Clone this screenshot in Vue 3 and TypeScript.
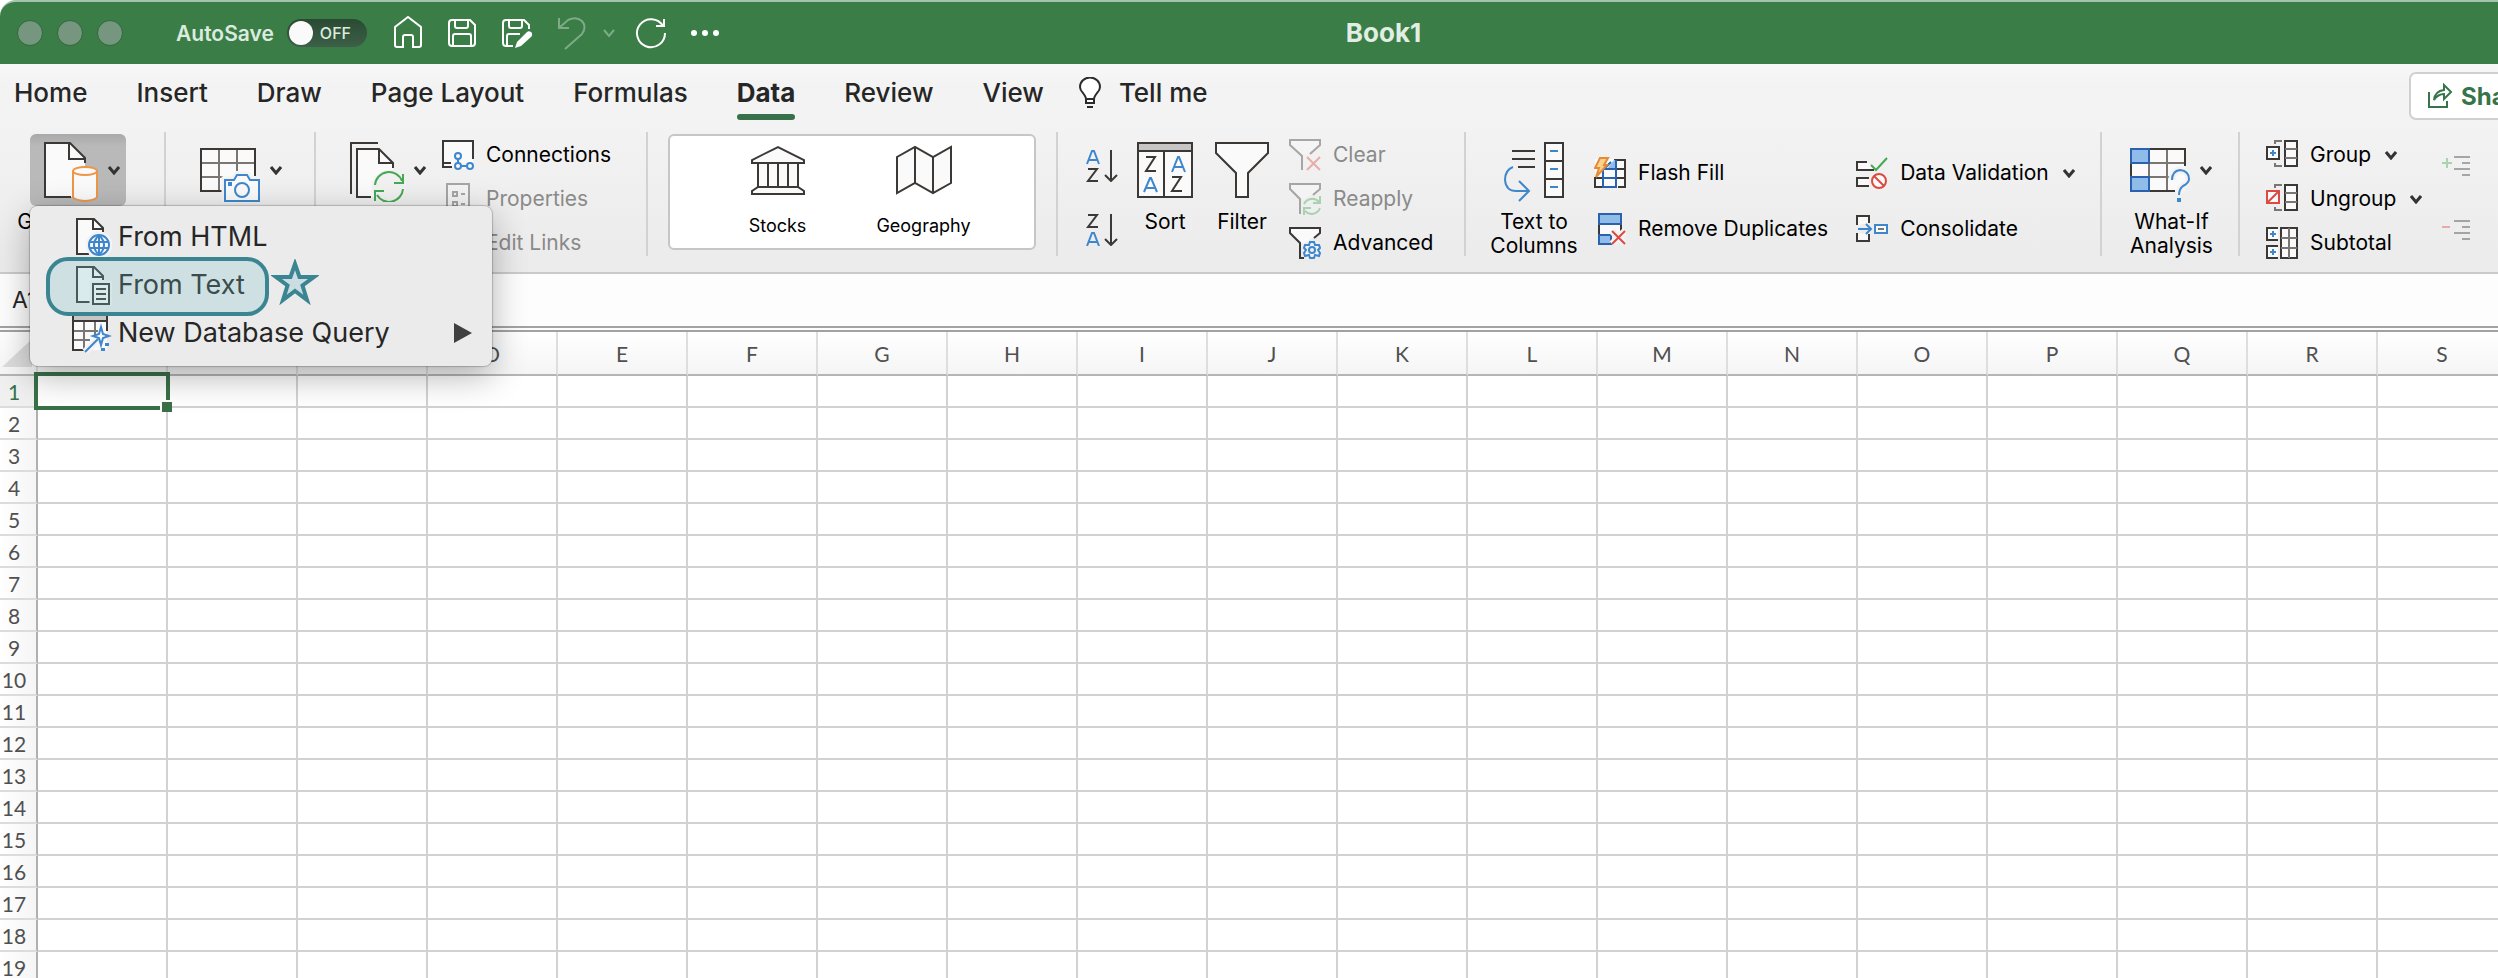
<script setup lang="ts">
import { ref } from 'vue'

const tabs: string[] = ['Home', 'Insert', 'Draw', 'Page Layout', 'Formulas', 'Data', 'Review', 'View']
const activeTab = ref<string>('Data')
const autoSave = ref<boolean>(false)
const cellName = ref<string>('A1')

const columns: string[] = Array.from({ length: 19 }, (_, i) => String.fromCharCode(65 + i))
const rows: number[] = Array.from({ length: 19 }, (_, i) => i + 1)
</script>

<template>
  <div class="window">
    <header class="titlebar">
      <div class="lights"><span></span><span></span><span></span></div>
      <label class="autosave">
        <span class="autosave-text">AutoSave</span>
        <span class="switch">
          <input v-model="autoSave" type="checkbox" role="switch" />
          <span class="switch-text">OFF</span>
        </span>
      </label>
      <div class="quick">
        <button type="button" aria-label="Home">
          <svg width="32" height="36" viewBox="0 0 32 36"><path d="M3 12L16 2L29 12V30Q29 32 27 32H21V22Q21 20 19 20H13Q11 20 11 22V32H5Q3 32 3 30Z" /></svg>
        </button>
        <button type="button" aria-label="Save">
          <svg width="32" height="36" viewBox="0 0 32 36"><path d="M6 5H24L29 10V28Q29 31 26 31H6Q3 31 3 28V8Q3 5 6 5ZM9 5V11Q9 13 11 13H20Q22 13 22 11V5M7 31V21Q7 19 9 19H23Q25 19 25 21V31" /></svg>
        </button>
        <button type="button" aria-label="Save as">
          <svg width="34" height="36" viewBox="0 0 34 36"><path d="M13 31H6Q3 31 3 28V8Q3 5 6 5H24L29 10V14M9 5V11Q9 13 11 13H20Q22 13 22 11V5M7 31V21Q7 19 9 19H20" /><path class="fill" d="M15 33L17 27L27 17Q29 15.500 31.500 17.500Q33 20 31 22L21 31Z" /></svg>
        </button>
        <button type="button" class="dim undo" aria-label="Undo">
          <svg width="32" height="36" viewBox="0 0 32 36"><path d="M3 3V13H13M3 13L12 5Q20 1 26 6Q31 12 26 19L9 34" /></svg>
        </button>
        <button type="button" class="dim drop" aria-label="Undo options">
          <svg width="14" height="36" viewBox="0 0 14 36"><path d="M2 15L7 21L12 15" /></svg>
        </button>
        <button type="button" class="redo" aria-label="Repeat">
          <svg width="34" height="36" viewBox="0 0 34 36"><path d="M29 11A14 14 0 1 0 31 18M30 4V11H22" /></svg>
        </button>
        <button type="button" class="more" aria-label="More">
          <svg width="30" height="36" viewBox="0 0 30 36"><g class="fill"><circle cx="4" cy="18" r="3" /><circle cx="15" cy="18" r="3" /><circle cx="26" cy="18" r="3" /></g></svg>
        </button>
      </div>
      <h1 class="doc">Book1</h1>
    </header>

    <nav class="tabs">
      <button v-for="tab in tabs" :key="tab" type="button" class="tab" :class="{ active: tab === activeTab }" @click="activeTab = tab">{{ tab }}</button>
      <button type="button" class="tab tell">
        <svg width="22" height="32" viewBox="0 0 22 32" fill="none" stroke="#2b2b2b" stroke-width="2"><path d="M7 26V22Q7 20 4 16Q1 13 1 10A9.500 9 0 0 1 21 10Q21 13 18 16Q15 20 15 22V26ZM7 22H15M8 30H14" fill="#fff" /></svg>
        <span>Tell me</span>
      </button>
      <button type="button" class="share">
        <svg width="26" height="26" viewBox="0 0 26 26" fill="none" stroke="#37744a" stroke-width="2"><path d="M2 9V24H20V18M7 17Q8 8 17 7V2L24 9L17 16V11Q11 11 7 17Z" /></svg>
        <span>Share</span>
      </button>
    </nav>

    <section class="ribbon">
      <div class="group g-import">
        <button type="button" class="big">
          <span class="face pressed">
            <svg class="ico" width="60" height="64" viewBox="0 0 60 64">
              <path class="paper" d="M1 5H26L41 20V59H1Z" />
              <path class="ink" d="M27 59H1V5H26L41 20V25M25 5V21H41" />
              <path class="paper orange" d="M29 33V59Q30 62 41 63Q52 62 53 59V33" />
              <ellipse class="paper orange" cx="41" cy="33" rx="12" ry="4" />
            </svg>
            <svg class="chev" width="12" height="10" viewBox="0 0 12 10"><path d="M1 2L6 8L11 2" /></svg>
          </span>
          <span class="cap">Get External<br />Data</span>
        </button>
      </div>

      <div class="group g-picture">
        <button type="button" class="big" aria-label="Data from Picture">
          <span class="face wide">
            <svg class="ico" width="60" height="64" viewBox="0 0 60 64">
              <path class="paper" d="M1 11H55V53H1Z" />
              <path class="ink soft" d="M19 11V53M37 11V33M1 25H55M1 39H23" />
              <path class="ink" d="M22 53H1V11H55V38" />
              <path class="halo" d="M25 42H34L37 37H47L50 42H59V63H25Z" />
              <path class="paper blue" d="M25 42H34L37 37H47L50 42H59V63H25Z" />
              <circle class="blue" cx="42" cy="52" r="7" />
              <path class="blue-fill" d="M28 44H32V48H28Z" />
            </svg>
            <svg class="chev" width="12" height="10" viewBox="0 0 12 10"><path d="M1 2L6 8L11 2" /></svg>
          </span>
        </button>
      </div>

      <div class="group g-refresh">
        <button type="button" class="big" aria-label="Refresh All">
          <span class="face">
            <svg class="ico" width="60" height="64" viewBox="0 0 60 64">
              <path class="ink" d="M1 56V5H28" />
              <path class="paper" d="M7 11H29L43 25V59H7Z" />
              <path class="ink" d="M21 59H7V11H29L43 25V30M29 11V25H43" />
              <circle class="back" cx="39" cy="49" r="17" />
              <path class="green" d="M25 47A14 14 0 0 1 52 43M53 36V45H44M53 51A14 14 0 0 1 27 57M25 63V53H34" />
            </svg>
            <svg class="chev" width="12" height="10" viewBox="0 0 12 10"><path d="M1 2L6 8L11 2" /></svg>
          </span>
        </button>
        <div class="stack">
          <button type="button" class="row">
            <svg class="ico" width="32" height="32" viewBox="0 0 32 32">
              <path class="paper" d="M1 2H31V28H1Z" />
              <path class="ink" d="M10 28H1V2H31V20M1 24H9" />
              <path class="halo" d="M16 17V27H28" />
              <path class="blue" d="M16 19V24M19 27H25" />
              <circle class="paper blue" cx="16" cy="17" r="3" /><circle class="paper blue" cx="16" cy="27" r="3" /><circle class="paper blue" cx="28" cy="27" r="3" />
            </svg>
            <span>Connections</span>
          </button>
          <button type="button" class="row off" disabled>
            <svg class="ico" width="32" height="32" viewBox="0 0 32 32">
              <path class="paper ink" d="M5 1H27V31H5ZM11 9H15V13H11ZM11 19H15V23H11ZM19 11H23M19 21H23" />
            </svg>
            <span>Properties</span>
          </button>
          <button type="button" class="row off" disabled>
            <svg class="ico" width="32" height="32" viewBox="0 0 32 32">
              <path class="paper ink" d="M5 3H21L27 9V29H5Z" />
            </svg>
            <span>Edit Links</span>
          </button>
        </div>
      </div>

      <div class="group g-types">
        <div class="gallery">
          <button type="button" class="kind">
            <svg class="ico" width="56" height="52" viewBox="0 0 56 52">
              <path class="paper ink" d="M2 18V15L28 2L54 15V18ZM8 18V42H48V18M18 18V42M28 18V42M38 18V42M8 42H48L54 46V49H2V46Z" />
            </svg>
            <span>Stocks</span>
          </button>
          <button type="button" class="kind">
            <svg class="ico" width="56" height="52" viewBox="0 0 56 52">
              <path class="paper ink" d="M1 12L19 2L37 12L55 2V38L37 48L19 38L1 48ZM19 2V38M37 12V48" />
            </svg>
            <span>Geography</span>
          </button>
        </div>
      </div>

      <div class="group g-sort">
        <div class="pair">
          <button type="button" aria-label="Sort ascending">
            <svg class="ico" width="32" height="32" viewBox="0 0 32 32">
              <path class="blue" d="M1 14L6 1H8L13 14M3 10H11" /><path class="ink" d="M2 19H11L2 31H12M25 0V30M19 25L25 31L31 25" />
            </svg>
          </button>
          <button type="button" aria-label="Sort descending">
            <svg class="ico" width="32" height="32" viewBox="0 0 32 32">
              <path class="ink" d="M2 1H11L2 13H12M25 0V30M19 25L25 31L31 25" /><path class="blue" d="M1 32L6 19H8L13 32M3 28H11" />
            </svg>
          </button>
        </div>
        <button type="button" class="big">
          <span class="face">
            <svg class="ico" width="60" height="64" viewBox="0 0 60 64">
              <path class="paper" d="M3 5H57V59H3Z" /><path d="M3 5H57V13H3Z" fill="#c8c6c4" />
              <path class="ink" d="M3 5H57V59H3ZM3 13H57M29 13V59M11 19H20L11 33H21M37 39H46L37 53H47" />
              <path class="blue" d="M9 54L15 40H16L22 54M11 50H20M37 34L43 19H44L50 34M39 29H48" />
            </svg>
          </span>
          <span class="cap">Sort</span>
        </button>
        <button type="button" class="big">
          <span class="face">
            <svg class="ico" width="60" height="64" viewBox="0 0 60 64">
              <path class="paper ink" d="M4 5H56V15L36 35V59H24V35L4 15Z" />
            </svg>
          </span>
          <span class="cap">Filter</span>
        </button>
        <div class="stack">
          <button type="button" class="row off" disabled>
            <svg class="ico" width="32" height="32" viewBox="0 0 32 32">
              <path class="paper" d="M1 1H31V6L14 17L1 6Z" /><path class="ink" d="M13 31V17L1 6V1H31V6L21 15" /><path class="red" d="M18 18L31 31M31 18L18 31" />
            </svg>
            <span>Clear</span>
          </button>
          <button type="button" class="row off" disabled>
            <svg class="ico" width="32" height="32" viewBox="0 0 32 32">
              <path class="paper" d="M1 1H31V6L14 17L1 6Z" /><path class="ink" d="M11 31V16L1 6V1H31V6L24 12" />
              <path class="green" d="M15 21A9 9 0 0 1 30 19M31 13V20H24M31 25A9 9 0 0 1 16 28M15 32V25H22" />
            </svg>
            <span>Reapply</span>
          </button>
          <button type="button" class="row">
            <svg class="ico" width="32" height="32" viewBox="0 0 32 32">
              <path class="paper" d="M1 1H31V6L14 17L1 6Z" /><path class="ink" d="M15 31H11V16L1 6V1H31V6L25 11" />
              <circle class="back" cx="23" cy="23" r="9" />
              <path class="blue" d="M21 15H25L26 18L30 18L31 21L29 23L31 26L30 29L26 28L25 31H21L20 28L16 29L15 26L17 23L15 21L16 18L20 18Z" /><circle class="blue" cx="23" cy="23" r="3" />
            </svg>
            <span>Advanced</span>
          </button>
        </div>
      </div>

      <div class="group g-tools">
        <button type="button" class="big">
          <span class="face">
            <svg class="ico" width="60" height="64" viewBox="0 0 60 64">
              <path class="paper ink" d="M41 5H59V59H41ZM41 23H59M41 41H59" />
              <path class="blue" d="M46 13H54M46 31H54M46 49H54M9 29Q1 32 1 42Q2 53 12 53H24M15 43L25 53L15 63" />
              <path class="ink" d="M8 13H31M8 21H31M14 29H31" />
            </svg>
          </span>
          <span class="cap">Text to<br />Columns</span>
        </button>
        <div class="stack tall">
          <button type="button" class="row">
            <svg class="ico" width="32" height="32" viewBox="0 0 32 32">
              <path class="paper" d="M1 2H31V30H1Z" /><path class="ink" d="M10 30H1V20M20 3H31V30H24M23 12H31M1 21H31" />
              <path d="M20 3H23V12H13Z" fill="#8fbce8" /><path class="navy" d="M22 3V30H9V12H23M9 21H22M17 5L10 12" />
              <path class="bolt" d="M6 1H14L10 8H13L2 20L5 11H1Z" />
            </svg>
            <span>Flash Fill</span>
          </button>
          <button type="button" class="row">
            <svg class="ico" width="32" height="32" viewBox="0 0 32 32">
              <path class="paper ink" d="M5 11H27V22H5Z" /><path class="navy sky" d="M5 1H27V11H5ZM5 22H17V31H5Z" />
              <path class="halo" d="M18 18L31 31M31 18L18 31" /><path class="red" d="M18 18L31 31M31 18L18 31" />
            </svg>
            <span>Remove Duplicates</span>
          </button>
        </div>
        <div class="stack tall">
          <button type="button" class="row">
            <svg class="ico" width="32" height="32" viewBox="0 0 32 32">
              <path class="paper ink" d="M11 5H1V13H18M13 21H1V29H13" /><path class="green" d="M15 8L20 13L31 1" />
              <circle class="paper red" cx="23" cy="24" r="7" /><path class="red" d="M18 19L28 29" />
            </svg>
            <span>Data Validation</span>
            <svg class="chev" width="12" height="10" viewBox="0 0 12 10"><path d="M1 2L6 8L11 2" /></svg>
          </button>
          <button type="button" class="row">
            <svg class="ico" width="32" height="32" viewBox="0 0 32 32">
              <path class="paper ink" d="M13 10V3H1V12M1 20V28H13V21" /><path class="paper blue" d="M19 12H31V20H19Z" />
              <path class="blue" d="M2 16H15M10 11L15 16L10 21" /><path class="ink soft" d="M22 16H28" />
            </svg>
            <span>Consolidate</span>
          </button>
        </div>
      </div>

      <div class="group g-whatif">
        <button type="button" class="big">
          <span class="face wide">
            <svg class="ico" width="60" height="64" viewBox="0 0 60 64">
              <path class="paper" d="M1 11H55V53H1Z" />
              <path class="ink soft" d="M19 11V53M37 11V53M1 25H55M1 39H44" />
              <path class="ink" d="M45 53H1V11H55V28" />
              <path class="navy sky" d="M1 11H19V25H1ZM1 39H19V53H1Z" />
              <path class="halo" d="M42 42Q42 33 50 32Q59 33 59 41Q59 45 53 48Q49 51 49 57" />
              <path class="blue" d="M42 42Q42 33 50 32Q59 33 59 41Q59 45 53 48Q49 51 49 57" /><path class="blue-fill" d="M47 60H51V64H47Z" />
            </svg>
            <svg class="chev" width="12" height="10" viewBox="0 0 12 10"><path d="M1 2L6 8L11 2" /></svg>
          </span>
          <span class="cap">What-If<br />Analysis</span>
        </button>
      </div>

      <div class="group g-outline">
        <div class="stack">
          <button type="button" class="row">
            <svg class="ico" width="32" height="32" viewBox="0 0 32 32">
              <path class="paper ink" d="M19 2H31V27H19Z" /><path class="ink soft" d="M19 10H31M19 19H31M16 2H9V5M16 27H9V24" />
              <path class="paper ink" d="M1 8H13V20H1Z" /><path class="blue" d="M4 14H10M7 11V17" />
            </svg>
            <span>Group</span>
            <svg class="chev" width="12" height="10" viewBox="0 0 12 10"><path d="M1 2L6 8L11 2" /></svg>
          </button>
          <button type="button" class="row">
            <svg class="ico" width="32" height="32" viewBox="0 0 32 32">
              <path class="paper ink" d="M19 2H31V27H19Z" /><path class="ink soft" d="M19 10H31M19 19H31M16 2H9V5M16 27H9V24" />
              <path class="paper red" d="M1 8H13V20H1ZM1 20L13 8" />
            </svg>
            <span>Ungroup</span>
            <svg class="chev" width="12" height="10" viewBox="0 0 12 10"><path d="M1 2L6 8L11 2" /></svg>
          </button>
          <button type="button" class="row">
            <svg class="ico" width="32" height="32" viewBox="0 0 32 32">
              <path class="paper ink" d="M15 1H31V31H15Z" /><path class="ink soft" d="M23 1V31M15 11H31M15 21H31" />
              <path class="paper ink" d="M12 1H1V13H12M12 19H1V31H12" /><path class="blue" d="M4 7H10M7 4V10M4 25H10M7 22V28" />
            </svg>
            <span>Subtotal</span>
          </button>
        </div>
        <div class="pair">
          <button type="button" class="off" disabled aria-label="Show detail">
            <svg class="ico" width="32" height="32" viewBox="0 0 32 32"><path class="green" d="M0 13H10M5 8V18" /><path class="ink" d="M12 7H28M20 13H28M12 19H28M20 25H28" /></svg>
          </button>
          <button type="button" class="off" disabled aria-label="Hide detail">
            <svg class="ico" width="32" height="32" viewBox="0 0 32 32"><path class="red" d="M0 13H8" /><path class="ink" d="M12 7H28M20 13H28M12 19H28M20 25H28" /></svg>
          </button>
        </div>
      </div>

      <div class="menu" role="menu">
        <button type="button" role="menuitem">
          <svg class="ico" width="40" height="40" viewBox="0 0 40 40">
            <path class="paper" d="M5 2H21L31 12V37H5Z" /><path class="ink" d="M17 37H5V2H22L31 11V15M21 2V12H31" />
            <circle class="halo" cx="27" cy="28" r="10" /><circle class="paper blue" cx="27" cy="28" r="10" />
            <path class="blue" d="M17 25H37M17 31H37M27 18Q17 28 27 38M27 18Q37 28 27 38M27 18V38" />
          </svg>
          <span>From HTML</span>
        </button>
        <button type="button" role="menuitem">
          <svg class="ico" width="40" height="40" viewBox="0 0 40 40">
            <path class="paper" d="M5 2H21L31 12V37H5Z" /><path class="ink" d="M18 37H5V2H22L31 11V15M21 2V12H31" />
            <path class="halo" d="M21 19H37V39H21Z" /><path class="paper ink" d="M21 19H37V39H21Z" /><path class="ink" d="M24 24H34M24 29H34M24 34H34" />
          </svg>
          <span>From Text</span>
        </button>
        <button type="button" role="menuitem">
          <svg class="ico" width="40" height="40" viewBox="0 0 40 40">
            <path class="paper" d="M1 2H35V37H1Z" /><path d="M1 0H35V8H1Z" fill="#c8c6c4" />
            <path class="ink soft" d="M12 8V36M23 8V24M1 18H26M1 27H18" /><path class="ink" d="M12 37H1V1H35V18M1 8H35" />
            <path class="halo" d="M13 39L29 23" />
            <path class="blue" d="M13 39L26 26" /><path class="paper blue" d="M29 14L31 21L37 23L31 25L29 32L27 25L21 23L27 21Z" />
            <path class="blue-fill" d="M33 30H37V33H33ZM29 35H33V38H29Z" />
          </svg>
          <span>New Database Query</span>
          <svg class="sub" width="18" height="20" viewBox="0 0 18 20"><path d="M0 0L18 10L0 20Z" fill="#404040" /></svg>
        </button>
        <span class="ring"></span>
        <svg class="star" width="48" height="46" viewBox="0 0 48 46"><path d="M24 5L28.500 18H43L31.500 26.500L36 41L24 32L12 41L16.500 26.500L5 18H19.500Z" fill="#c9dde3" stroke="#3a8591" stroke-width="4" /></svg>
      </div>
    </section>

    <div class="formula">
      <input v-model="cellName" type="text" aria-label="Name box" />
    </div>

    <main class="sheet">
      <table>
        <thead>
          <tr>
            <th class="corner"><svg width="30" height="28" viewBox="0 0 30 28"><path d="M30 0V28H0Z" fill="#dcdcdc" /></svg></th>
            <th v-for="col in columns" :key="col" scope="col">{{ col }}</th>
          </tr>
        </thead>
        <tbody>
          <tr v-for="row in rows" :key="row">
            <th scope="row" :class="{ current: row === 1 }">{{ row }}</th>
            <td v-for="col in columns" :key="col"><span v-if="row === 1 && col === 'A'" class="selection"></span></td>
          </tr>
        </tbody>
      </table>
    </main>
  </div>
</template>

<style>
body {
  margin: 0;
}
</style>

<style scoped>
.window {
  height: 100vh;
  overflow: hidden;
  display: flex;
  flex-direction: column;
  background: #fff;
  color: #262626;
  font-family: Inter, "Liberation Sans", sans-serif;
}
button {
  margin: 0;
  padding: 0;
  border: 0;
  background: none;
  color: inherit;
  font: inherit;
  text-align: inherit;
}
svg {
  display: block;
  flex: none;
}

/* title bar */
.titlebar {
  flex: none;
  box-sizing: border-box;
  height: 64px;
  display: flex;
  align-items: center;
  padding-left: 17px;
  border-top: 2px solid #a3c4aa;
  border-top-left-radius: 16px;
  background: #3a7d47;
  color: #dcebdf;
}
.lights {
  display: flex;
  gap: 14px;
}
.lights span {
  box-sizing: border-box;
  width: 26px;
  height: 26px;
  border: 1px solid #2f693b;
  border-radius: 50%;
  background: #769680;
}
.autosave {
  display: flex;
  align-items: center;
  gap: 13px;
  margin-left: 53px;
  font-size: 21px;
  font-weight: 600;
}
.switch {
  display: grid;
  align-items: center;
}
.switch > * {
  grid-area: 1 / 1;
}
.switch input {
  appearance: none;
  margin: 0;
  width: 80px;
  height: 28px;
  border-radius: 14px;
  background: linear-gradient(#2a4a33, #3c5f47);
}
.switch input::before {
  content: "";
  display: block;
  width: 24px;
  height: 24px;
  margin: 2px;
  border-radius: 50%;
  background: #fafafa;
}
.switch-text {
  padding-left: 33px;
  font-size: 16px;
  font-weight: 500;
}
.quick {
  display: flex;
  align-items: center;
  gap: 22px;
  margin-left: 25px;
}
.quick svg {
  fill: none;
  stroke: #fff;
  stroke-width: 2;
}
.quick .fill {
  fill: #fff;
  stroke: none;
}
.quick .dim {
  opacity: 0.35;
}
.quick .drop {
  margin-left: -8px;
}
.quick .redo {
  margin-left: -4px;
}
.doc {
  margin: 0 0 0 626px;
  color: #e2ede4;
  font-size: 26px;
  line-height: 32px;
  font-weight: 700;
}

/* tabs */
.tabs {
  flex: none;
  height: 56px;
  display: flex;
  align-items: stretch;
  gap: 49px;
  padding-left: 14px;
  background: linear-gradient(#f8f8f8, #f3f3f3 20px);
}
.tab {
  flex: none;
  border-bottom: 6px solid transparent;
  padding-top: 8px;
  font-size: 26px;
  line-height: 42px;
  font-weight: 500;
  white-space: nowrap;
}
.tab.active {
  position: relative;
  font-weight: 700;
}
.tab.active::after {
  content: "";
  position: absolute;
  left: 0;
  right: 0;
  bottom: -6px;
  height: 6px;
  border-radius: 3px;
  background: #37704a;
}
.tell {
  display: flex;
  align-items: center;
  gap: 18px;
  margin-left: -14px;
}
.share {
  flex: none;
  box-sizing: border-box;
  display: flex;
  align-items: center;
  gap: 8px;
  width: 140px;
  height: 48px;
  margin: 8px -51px 0 auto;
  padding-left: 16px;
  border: 2px solid #d0d0d0;
  border-radius: 7px;
  background: #fff;
  color: #37744a;
  font-size: 24px;
  font-weight: 700;
}

/* ribbon */
.ribbon {
  flex: none;
  position: relative;
  box-sizing: border-box;
  height: 154px;
  display: flex;
  padding-top: 12px;
  border-bottom: 2px solid #cacaca;
  background: linear-gradient(#f3f3f3, #ebebeb);
  color: #000;
  font-size: 21px;
  line-height: 24px;
}
.group {
  flex: none;
  box-sizing: border-box;
  height: 124px;
  display: flex;
  align-items: flex-start;
  border-right: 2px solid #d2d2d2;
}
.g-import {
  width: 166px;
  padding-left: 16px;
}
.g-picture {
  width: 150px;
  padding-left: 34px;
}
.g-refresh {
  width: 332px;
  padding-left: 34px;
  gap: 16px;
}
.g-types {
  width: 410px;
  padding-left: 20px;
}
.g-sort {
  width: 408px;
  padding-left: 28px;
  gap: 17px;
}
.g-tools {
  width: 636px;
  padding-left: 24px;
}
.g-whatif {
  width: 138px;
  padding-left: 28px;
}
.g-outline {
  padding-left: 26px;
  gap: 20px;
  border-right: 0;
}
.big {
  flex: none;
  display: flex;
  flex-direction: column;
  align-items: center;
  gap: 4px;
  padding-top: 2px;
}
.g-import .big {
  width: 124px;
}
.g-tools .big {
  width: 88px;
}
.face {
  height: 72px;
  display: flex;
  align-items: center;
  gap: 4px;
}
.face.wide {
  gap: 10px;
}
.face.pressed {
  padding: 0 6px 0 14px;
  border-radius: 6px;
  background: linear-gradient(#a9a9a9, #b9b9b9 12px);
}
.cap {
  text-align: center;
  white-space: nowrap;
}
.stack {
  flex: none;
  display: flex;
  flex-direction: column;
  padding-top: 1px;
}
.row {
  height: 44px;
  display: flex;
  align-items: center;
  gap: 12px;
  white-space: nowrap;
}
.row .chev {
  margin-left: 2px;
}
.stack.tall {
  padding-top: 13px;
  padding-left: 16px;
}
.stack.tall .row {
  height: 56px;
}
.stack.tall + .stack.tall {
  padding-left: 28px;
}
.off {
  color: #8a8a8a;
}
.off .ico {
  opacity: 0.4;
}
.pair {
  flex: none;
  padding-top: 2px;
}
.pair button {
  display: flex;
  align-items: center;
  height: 64px;
}
.gallery {
  box-sizing: border-box;
  width: 368px;
  height: 116px;
  display: grid;
  grid-template-columns: 146px 146px;
  justify-content: center;
  align-items: start;
  margin-top: 2px;
  padding: 9px 3px 0 0;
  border: 2px solid #c6c6c6;
  border-radius: 6px;
  background: #fff;
  font-size: 18px;
}
.kind {
  display: flex;
  flex-direction: column;
  align-items: center;
  gap: 17px;
}

/* icon strokes */
.ico,
.chev {
  fill: none;
  stroke-width: 2;
}
.chev path {
  stroke: #333;
  stroke-width: 3;
}
.paper {
  fill: #fafafa;
}
.ink {
  stroke: #3b3836;
}
.ink.soft {
  stroke: #797673;
}
.blue {
  stroke: #3f87cd;
}
.blue-fill {
  fill: #3f87cd;
}
.navy {
  stroke: #2a62b0;
}
.sky {
  fill: #8fbce8;
}
.green {
  stroke: #45a853;
}
.red {
  stroke: #dc4a41;
}
.orange {
  stroke: #ee9647;
}
.bolt {
  fill: #f9d48c;
  stroke: #e58b38;
}
.halo {
  stroke: #f3f3f3;
  stroke-width: 7;
}
.back {
  fill: #f1f1f1;
}

/* drop-down menu */
.menu {
  position: absolute;
  z-index: 3;
  top: 86px;
  left: 30px;
  box-sizing: border-box;
  width: 462px;
  height: 160px;
  display: flex;
  flex-direction: column;
  padding-top: 7px;
  border-radius: 8px;
  background: #ebebeb;
  box-shadow: 0 0 1px 1px rgba(0, 0, 0, 0.2), 0 10px 34px rgba(0, 0, 0, 0.3);
  color: #262626;
  font-size: 27px;
}
.menu button {
  height: 48px;
  display: flex;
  align-items: center;
  gap: 6px;
  padding: 0 20px 0 42px;
}
.menu .sub {
  margin-left: auto;
}
.ring {
  position: absolute;
  top: 51px;
  left: 16px;
  box-sizing: border-box;
  width: 223px;
  height: 59px;
  border: 4px solid #3a8591;
  border-radius: 22px;
  background: rgba(120, 190, 195, 0.25);
}
.star {
  position: absolute;
  top: 53px;
  left: 241px;
}

/* formula bar */
.formula {
  flex: none;
  box-sizing: border-box;
  height: 58px;
  border-bottom: 6px double #a2a2a2;
  background: #fdfdfd;
}
.formula input {
  box-sizing: border-box;
  width: 180px;
  height: 52px;
  padding: 0 0 0 12px;
  border: 0;
  background: none;
  color: #262626;
  font: 23px Inter, "Liberation Sans", sans-serif;
}

/* sheet */
.sheet {
  flex: 1;
  min-height: 0;
  overflow: hidden;
}
table {
  width: 0;
  table-layout: fixed;
  border-collapse: separate;
  border-spacing: 0;
  color: #505050;
  font: 21px Lato, "Open Sans", sans-serif;
}
th,
td {
  box-sizing: border-box;
  width: 130px;
  height: 32px;
  padding: 0;
  border-right: 2px solid #d2d2d2;
  border-bottom: 2px solid #d2d2d2;
  font-weight: 400;
}
td {
  position: relative;
}
thead th {
  height: 44px;
  border-right-color: #dedede;
  border-bottom-color: #b5b5b5;
  background: linear-gradient(#fff, #f5f5f5);
}
th.corner,
tbody th {
  width: 38px;
}
.corner svg {
  margin-left: 2px;
}
tbody th {
  padding-right: 8px;
  border-right-color: #b0b0b0;
  border-bottom-color: #dcdcdc;
  background: linear-gradient(90deg, #fff, #f5f5f5);
}
tbody th.current {
  background: #f0f0f0;
  color: #37704a;
}
.selection {
  position: absolute;
  z-index: 1;
  inset: -4px;
  border: 4px solid #3a7048;
}
.selection::after {
  content: "";
  position: absolute;
  right: -6px;
  bottom: -6px;
  width: 10px;
  height: 10px;
  background: #3a7048;
  box-shadow: -2px -2px 0 #fff, 0 -2px 0 #fff, -2px 0 0 #fff;
}
</style>
